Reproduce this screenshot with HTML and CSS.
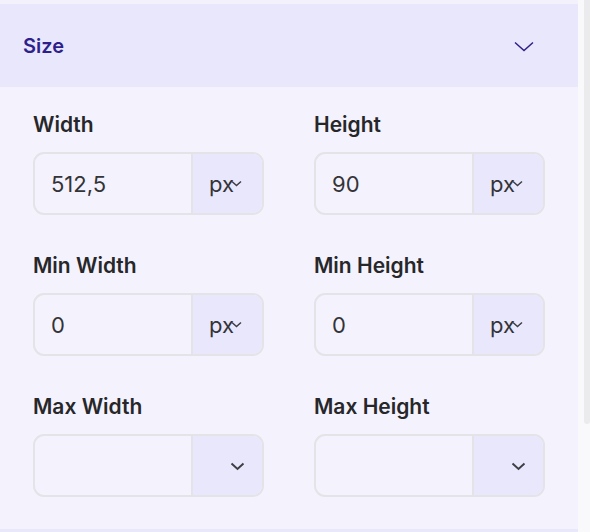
FILE: index.html
```html
<!DOCTYPE html>
<html>
<head>
<meta charset="utf-8">
<link rel="stylesheet" href="styles.css">
</head>
<body>
<div class="frame">
  <div class="panel">
    <div class="topstrip"></div>
    <div class="header">
      <span class="title">Size</span>
      <svg class="hchev" width="20" height="11" viewBox="0 0 20 11"><path d="M1 1.5 L10 9.5 L19 1.5" fill="none" stroke="#2e1f8c" stroke-width="1.5"/></svg>
    </div>
    <div class="body">
      <div class="field">
        <div class="label">Width</div>
        <div class="box"><div class="val">512,5</div><div class="unit">px<svg class="schev" width="11" height="7" viewBox="0 0 11 7"><path d="M1 1.5 L5.5 5.5 L10 1.5" fill="none" stroke="#3f3f46" stroke-width="1.5"/></svg></div></div>
      </div>
      <div class="field">
        <div class="label">Height</div>
        <div class="box"><div class="val">90</div><div class="unit">px<svg class="schev" width="11" height="7" viewBox="0 0 11 7"><path d="M1 1.5 L5.5 5.5 L10 1.5" fill="none" stroke="#3f3f46" stroke-width="1.5"/></svg></div></div>
      </div>
      <div class="field">
        <div class="label">Min Width</div>
        <div class="box"><div class="val">0</div><div class="unit">px<svg class="schev" width="11" height="7" viewBox="0 0 11 7"><path d="M1 1.5 L5.5 5.5 L10 1.5" fill="none" stroke="#3f3f46" stroke-width="1.5"/></svg></div></div>
      </div>
      <div class="field">
        <div class="label">Min Height</div>
        <div class="box"><div class="val">0</div><div class="unit">px<svg class="schev" width="11" height="7" viewBox="0 0 11 7"><path d="M1 1.5 L5.5 5.5 L10 1.5" fill="none" stroke="#3f3f46" stroke-width="1.5"/></svg></div></div>
      </div>
      <div class="field">
        <div class="label">Max Width</div>
        <div class="box"><div class="val"></div><div class="unit"><svg class="echev" width="15" height="9" viewBox="0 0 15 9"><path d="M1.5 1.5 L7.5 7 L13.5 1.5" fill="none" stroke="#3f3f46" stroke-width="2"/></svg></div></div>
      </div>
      <div class="field">
        <div class="label">Max Height</div>
        <div class="box"><div class="val"></div><div class="unit"><svg class="echev" width="15" height="9" viewBox="0 0 15 9"><path d="M1.5 1.5 L7.5 7 L13.5 1.5" fill="none" stroke="#3f3f46" stroke-width="2"/></svg></div></div>
      </div>
    </div>
    <div class="nextbar"></div>
  </div>
  <div class="track"><div class="thumb"></div></div>
</div>
</body>
</html>
```
FILE: styles.css
```css
html, body {
  margin: 0;
  padding: 0;
}
body {
  width: 590px;
  height: 532px;
  overflow: hidden;
  background: #f4f3fd;
  font-family: Inter, "Noto Sans", sans-serif;
}
.frame {
  display: flex;
  height: 532px;
}
.panel {
  width: 578px;
  display: flex;
  flex-direction: column;
  background: #f4f3fd;
}
.topstrip {
  height: 4px;
  background: #f3f2fc;
}
.header {
  height: 83px;
  background: #e9e7fb;
  display: flex;
  align-items: center;
  justify-content: space-between;
  padding: 0 44px 0 23px;
}
.title {
  font-size: 20px;
  font-weight: 600;
  color: #2e1f8c;
}
.hchev {
  display: block;
  margin-top: 2px;
}
.body {
  flex: 1;
  padding: 27px 33px 0 33px;
  display: grid;
  grid-template-columns: 231px 231px;
  column-gap: 50px;
  row-gap: 40px;
  align-content: start;
}
.label {
  font-size: 21px;
  line-height: 22px;
  font-weight: 600;
  color: #27272a;
  margin-bottom: 16px;
}
.box {
  height: 63px;
  box-sizing: border-box;
  border: 2px solid #e3e3e8;
  border-radius: 11px;
  display: flex;
  overflow: hidden;
  background: #f4f3fd;
}
.val {
  flex: 1;
  display: flex;
  align-items: center;
  padding-left: 16px;
  font-size: 22px;
  color: #333338;
}
.unit {
  width: 71px;
  border-left: 2px solid #e3e3e8;
  background: #e9e7fb;
  position: relative;
  display: flex;
  align-items: center;
  padding-left: 16px;
  box-sizing: border-box;
  font-size: 22px;
  color: #333338;
}
.schev {
  position: absolute;
  right: 20px;
  top: 26px;
}
.echev {
  position: absolute;
  right: 17px;
  top: 26px;
}
.nextbar {
  height: 3px;
  background: #e9e7fb;
}
.track {
  width: 12px;
  background: #f9f9fb;
  padding-left: 6px;
  box-sizing: border-box;
}
.thumb {
  height: 424px;
  background: #ebebed;
  border-radius: 0 0 3px 3px;
}
```
